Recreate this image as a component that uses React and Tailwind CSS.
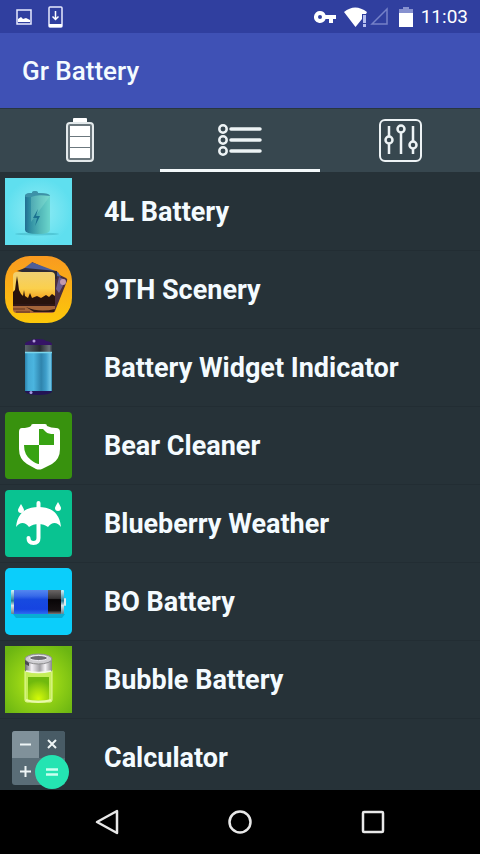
import React, { useState } from 'react';

function FourLIcon() {
  return (
    <svg viewBox="0 0 67 67" className="h-[67px] w-[67px]" aria-hidden="true">
      <defs>
        <radialGradient id="fourBg">
          <stop offset="0" stopColor="#92ecf4" />
          <stop offset="1" stopColor="#5fdfef" />
        </radialGradient>
        <linearGradient id="fourBody" x1="0" y1="0" x2="1" y2="0">
          <stop offset="0" stopColor="#216d91" />
          <stop offset="0.2" stopColor="#2f8da2" />
          <stop offset="0.6" stopColor="#52b7b8" />
          <stop offset="1" stopColor="#6bd6cc" />
        </linearGradient>
      </defs>
      <rect width="67" height="67" fill="url(#fourBg)" />
      <ellipse cx="32" cy="56" rx="22" ry="1.5" fill="#3aaebd" opacity="0.5" />
      <path d="M20 18q0-3 7-3q0-2 3-2q3 0 3 2q12 0 12 3v34q0 4-12 4q-13 0-13-4z" fill="url(#fourBody)" />
      <path d="M20 18q0-3 7-3q0-2 3-2q3 0 3 2q12 0 12 3q-15-2-19 1q-6 1-6-1z" fill="#3d91a8" />
      <path d="M45 18L26 44V19q7-3 19-1z" fill="#a5eee0" opacity="0.25" />
      <path d="M33 31l-5 9h4l-2 8l5-10h-4z" fill="#1b7290" />
    </svg>
  );
}

function SceneryIcon() {
  return (
    <svg viewBox="0 0 67 67" className="h-[67px] w-[67px]" aria-hidden="true">
      <defs>
        <linearGradient id="scBg" x1="0" y1="0" x2="0" y2="1">
          <stop offset="0" stopColor="#f99a20" />
          <stop offset="1" stopColor="#fcc80a" />
        </linearGradient>
        <linearGradient id="scSky" x1="0" y1="0" x2="0" y2="1">
          <stop offset="0" stopColor="#f0cf72" />
          <stop offset="0.4" stopColor="#fbd04c" />
          <stop offset="0.7" stopColor="#f19a19" />
        </linearGradient>
        <clipPath id="scClip">
          <rect x="8" y="16" width="42" height="41" rx="4" />
        </clipPath>
      </defs>
      <rect width="67" height="67" rx="25" fill="url(#scBg)" />
      <path d="M27 6L61 22q2 1 1 3L50 55q-1 2-3 1L14 40z" fill="#4b2f3c" />
      <path d="M18 13L26 7q1-1 3 0l24 9l3 5l-12-3z" fill="#4d5e99" />
      <path d="M54 21l7 3l-7 13l-3-4z" fill="#6b5c8c" />
      <circle cx="58" cy="26" r="3" fill="#c39aae" />
      <path d="M12 15l8-3l32 3v8z" fill="#2c2a35" />
      <g clipPath="url(#scClip)">
        <rect x="8" y="16" width="42" height="41" fill="url(#scSky)" />
        <path d="M8 36L10 34L11 26L12 20L13 26L14 34L16 38L18 40L19 34L20 40L23 42L25 37L27 42L32 40L36 42L41 39L44 41L47 38L50 40V49H8z" fill="#28120d" />
        <rect x="8" y="48" width="42" height="9" fill="#a5643a" />
        <path d="M8 48h42v2H8z" fill="#301716" />
        <path d="M21 51q13 6 29 2v3H29z" fill="#2d1917" />
        <path d="M8 53h12M11 56h14" stroke="#60331f" strokeWidth="1" />
      </g>
    </svg>
  );
}

function WidgetIndicatorIcon() {
  return (
    <svg viewBox="0 0 67 67" className="h-[67px] w-[67px]" aria-hidden="true">
      <defs>
        <linearGradient id="wiBody" x1="0" y1="0" x2="1" y2="0">
          <stop offset="0" stopColor="#2b83ad" />
          <stop offset="0.12" stopColor="#45abd6" />
          <stop offset="0.32" stopColor="#4bb5df" />
          <stop offset="0.6" stopColor="#2f84ad" />
          <stop offset="0.78" stopColor="#3f9fcb" />
          <stop offset="0.94" stopColor="#70c7e8" />
          <stop offset="1" stopColor="#287fa9" />
        </linearGradient>
        <linearGradient id="wiEmpty" x1="0" y1="0" x2="1" y2="0">
          <stop offset="0" stopColor="#59636a" />
          <stop offset="0.55" stopColor="#272b30" />
          <stop offset="0.9" stopColor="#6a7177" />
          <stop offset="1" stopColor="#343b42" />
        </linearGradient>
      </defs>
      <path d="M20 10q0-2 5-3q1-2 8-2q7 0 8 2q6 1 6 3v3H20z" fill="#351466" />
      <circle cx="29" cy="7" r="1.5" fill="#b49bdb" />
      <rect x="20" y="11" width="27" height="9" fill="url(#wiEmpty)" />
      <path d="M20 56h27v2q-3 3-14 3q-10 0-13-3z" fill="#231354" />
      <circle cx="26" cy="58.5" r="1.5" fill="#a59ae3" />
      <rect x="20" y="18" width="27" height="39" fill="url(#wiBody)" />
      <path d="M20 18.500h27" stroke="#7bd5eb" strokeWidth="1.500" />
    </svg>
  );
}

function BearCleanerIcon() {
  return (
    <svg viewBox="0 0 67 67" className="h-[67px] w-[67px]" aria-hidden="true">
      <rect width="67" height="67" rx="4" fill="#38920e" />
      <path d="M17 16q6 0 9-2q0-2 2-2h12q2 0 2 2q4 2 9 2q4 0 4 4v17q0 10-8 15l-10 5q-3 1-6 0l-9-5q-8-5-8-15V20q0-4 3-4z" fill="#fff" />
      <path d="M34 17h4l3 3q2 2 8 2v11H34zM19 33h15v19q-3 0-8-4q-7-5-7-15z" fill="#38a313" />
    </svg>
  );
}

function WeatherIcon() {
  return (
    <svg viewBox="0 0 67 67" className="h-[67px] w-[67px]" aria-hidden="true">
      <rect width="67" height="67" rx="4" fill="#09c391" />
      <path d="M33.500 13v5M33.500 34v14q0 5-5 5t-5-5" fill="none" stroke="#fff" strokeWidth="4" strokeLinecap="round" />
      <path d="M11 37q2-20 22.500-20T56 37q-3-4-6.500-4T43 37q-4-3-9.500-3T24 37q-3-4-6.500-4T11 37z" fill="#fff" />
      <path d="M16 14q-3 5-3 6a3 3 0 0 0 6 0q0-1-3-6zM53 12q-3 5-3 6a3 3 0 0 0 6 0q0-1-3-6z" fill="#fff" />
    </svg>
  );
}

function BoBatteryIcon() {
  return (
    <svg viewBox="0 0 67 67" className="h-[67px] w-[67px]" aria-hidden="true">
      <defs>
        <linearGradient id="boBlue" x1="0" y1="0" x2="0" y2="1">
          <stop offset="0" stopColor="#5487f0" />
          <stop offset="0.25" stopColor="#376ae9" />
          <stop offset="0.4" stopColor="#174ae0" />
          <stop offset="0.8" stopColor="#1644e1" />
          <stop offset="1" stopColor="#2e6bf2" />
        </linearGradient>
        <linearGradient id="boBlack" x1="0" y1="0" x2="0" y2="1">
          <stop offset="0" stopColor="#6a6666" />
          <stop offset="0.35" stopColor="#363435" />
          <stop offset="0.4" stopColor="#080507" />
          <stop offset="0.85" stopColor="#161113" />
          <stop offset="1" stopColor="#827776" />
        </linearGradient>
        <linearGradient id="boMetal" x1="0" y1="0" x2="0" y2="1">
          <stop offset="0" stopColor="#d6f6fb" />
          <stop offset="0.45" stopColor="#287b95" />
          <stop offset="0.65" stopColor="#d9e4e8" />
          <stop offset="1" stopColor="#66818a" />
        </linearGradient>
      </defs>
      <rect width="67" height="67" rx="5" fill="#0bcefb" />
      <path d="M8 46h52l-3 4H11z" fill="#058bac" opacity="0.5" />
      <rect x="6" y="22" width="4" height="24" rx="1" fill="url(#boMetal)" />
      <rect x="56" y="22" width="3" height="24" rx="1" fill="url(#boMetal)" />
      <rect x="59" y="30" width="2" height="8" rx="1" fill="#dce9ed" />
      <rect x="9" y="22" width="35" height="24" fill="url(#boBlue)" />
      <rect x="43" y="22" width="13" height="24" fill="url(#boBlack)" />
    </svg>
  );
}

function BubbleBatteryIcon() {
  return (
    <svg viewBox="0 0 67 67" className="h-[67px] w-[67px]" aria-hidden="true">
      <defs>
        <radialGradient id="buBg" cx="50%" cy="55%" r="65%">
          <stop offset="0" stopColor="#c0ef15" />
          <stop offset="0.5" stopColor="#91d015" />
          <stop offset="1" stopColor="#6bb512" />
        </radialGradient>
        <linearGradient id="buMetal" x1="0" y1="0" x2="1" y2="0">
          <stop offset="0" stopColor="#68686b" />
          <stop offset="0.25" stopColor="#f4f1f5" />
          <stop offset="0.55" stopColor="#a19fa4" />
          <stop offset="0.75" stopColor="#f5f3f6" />
          <stop offset="1" stopColor="#88878b" />
        </linearGradient>
        <radialGradient id="buFill" cx="50%" cy="95%" r="80%">
          <stop offset="0" stopColor="#d4fb06" />
          <stop offset="0.5" stopColor="#a5da0e" />
          <stop offset="1" stopColor="#70b90d" />
        </radialGradient>
      </defs>
      <rect width="67" height="67" fill="url(#buBg)" />
      <rect x="20" y="23" width="27" height="33" rx="2" fill="#c5ee5a" stroke="#e5f79e" strokeWidth="1" />
      <rect x="23" y="31" width="21" height="23" fill="url(#buFill)" />
      <path d="M21 54q12 4 25 0" stroke="#e9f9aa" strokeWidth="2" fill="none" />
      <path d="M20 14q13 7 27 0v11q-13 3-27 0z" fill="url(#buMetal)" />
      <ellipse cx="33.500" cy="13" rx="13.500" ry="5" fill="#cfced2" stroke="#8d8c90" strokeWidth="1" />
      <ellipse cx="33.500" cy="12" rx="9" ry="2.500" fill="#6d6b70" stroke="#eeedf1" strokeWidth="1" />
      <path d="M20 14l4 3v3l-4-2z" fill="#4b4b50" />
      <path d="M21 25q12 3 25 0" stroke="#f5f6e8" strokeWidth="1.500" fill="none" />
    </svg>
  );
}

function CalculatorIcon() {
  return (
    <svg viewBox="0 0 67 67" className="h-[67px] w-[67px]" aria-hidden="true">
      <defs>
        <clipPath id="calcClip">
          <rect x="7" y="7" width="53" height="54" rx="3" />
        </clipPath>
      </defs>
      <g clipPath="url(#calcClip)">
        <rect x="7" y="7" width="53" height="54" fill="#5a6d77" />
        <rect x="7" y="7" width="27" height="27" fill="#80919a" />
        <rect x="34" y="7" width="26" height="27" fill="#485b65" />
      </g>
      <path d="M15 20.500h11M15 47.500h11M20.500 42v11M43 16l8 8M51 16l-8 8" stroke="#eef5f6" strokeWidth="2" fill="none" />
      <circle cx="47" cy="48" r="17" fill="#24e4b2" />
      <path d="M41 45.500h12M41 50.500h12" stroke="#c9fff0" strokeWidth="2.500" />
    </svg>
  );
}

function BatteryTabIcon() {
  return (
    <svg viewBox="0 0 28 44" className="h-11 w-7" aria-hidden="true">
      <rect x="7" y="0" width="14" height="6" rx="1" fill="#fff" />
      <rect x="1" y="5" width="26" height="38" rx="3" fill="#6b777d" stroke="#e3e9eb" strokeWidth="2" />
      <path d="M4 8h20v10H4zM4 19h20v10H4zM4 30h20v10H4z" fill="#fff" />
    </svg>
  );
}

function ListTabIcon() {
  return (
    <svg viewBox="0 0 44 34" className="h-[34px] w-11" fill="none" stroke="#edf3f5" aria-hidden="true">
      <g strokeWidth="2.500">
        <circle cx="5" cy="6" r="3.700" />
        <circle cx="5" cy="17" r="3.700" />
        <circle cx="5" cy="28" r="3.700" />
      </g>
      <path d="M13 6h29M13 17h29M13 28h29" strokeWidth="3.500" strokeLinecap="round" />
    </svg>
  );
}

function SlidersTabIcon() {
  return (
    <svg viewBox="0 0 44 44" className="h-11 w-11" fill="none" stroke="#edf3f5" strokeWidth="2.500" aria-hidden="true">
      <rect x="2" y="2" width="41" height="41" rx="5" strokeWidth="2" />
      <path d="M11 8v10M11 26v10M23 15v21M35 8v15M35 31v5" />
      <circle cx="11" cy="22" r="3.500" />
      <circle cx="23" cy="11" r="3.500" />
      <circle cx="35" cy="27" r="3.500" />
    </svg>
  );
}

const apps = [
  { name: '4L Battery', Icon: FourLIcon },
  { name: '9TH Scenery', Icon: SceneryIcon },
  { name: 'Battery Widget Indicator', Icon: WidgetIndicatorIcon },
  { name: 'Bear Cleaner', Icon: BearCleanerIcon },
  { name: 'Blueberry Weather', Icon: WeatherIcon },
  { name: 'BO Battery', Icon: BoBatteryIcon },
  { name: 'Bubble Battery', Icon: BubbleBatteryIcon },
  { name: 'Calculator', Icon: CalculatorIcon },
];

const tabs = [
  { id: 'battery', label: 'Battery', Icon: BatteryTabIcon },
  { id: 'apps', label: 'Apps', Icon: ListTabIcon },
  { id: 'settings', label: 'Settings', Icon: SlidersTabIcon },
];

function StatusBar() {
  return (
    <div className="flex h-[33px] shrink-0 items-center justify-between bg-[#303f9f] pl-4 pr-3 text-white">
      <div className="flex items-center gap-4">
        <svg viewBox="0 0 16 16" className="h-4 w-4" aria-hidden="true">
          <rect x="1" y="1" width="14" height="14" fill="none" stroke="#e6eaff" strokeWidth="1.500" />
          <path d="M2 13v-3l3-2l2 2l3-1l4 2v2z" fill="#fff" />
        </svg>
        <svg viewBox="0 0 16 22" className="h-[22px] w-4" aria-hidden="true">
          <rect x="1" y="1" width="13" height="20" rx="1" fill="none" stroke="#e6eaff" strokeWidth="1.500" />
          <path d="M1 18h13v3H1z" fill="#fff" />
          <path d="M7.500 5v8M4.500 10.500l3 3l3-3" fill="none" stroke="#fff" strokeWidth="1.500" />
        </svg>
      </div>
      <div className="flex items-center">
        <svg viewBox="0 0 22 14" className="h-[14px] w-[22px]" aria-hidden="true">
          <path fillRule="evenodd" d="M6 1a6 6 0 1 0 5.600 8H15v4h4V9h3V5H11.600A6 6 0 0 0 6 1zm0 4a2 2 0 1 1 0 4a2 2 0 0 1 0-4z" fill="#fff" />
        </svg>
        <svg viewBox="0 0 24 20" className="ml-2 h-5 w-6" aria-hidden="true">
          <path d="M0 5q11-9 23 0l-1 2h-4v5l-6.500 8z" fill="#fff" />
          <path d="M19 8h3v8h-3zM19 17h3v3h-3z" fill="#b7c0ef" />
        </svg>
        <svg viewBox="0 0 19 19" className="ml-0.5 h-[19px] w-[19px]" aria-hidden="true">
          <path d="M2 17L17 2v15z" fill="none" stroke="#7581c8" strokeWidth="1.500" />
        </svg>
        <svg viewBox="0 0 14 20" className="ml-2.5 h-5 w-3.5" aria-hidden="true">
          <path d="M4 0h6v2h4v4H0V2h4z" fill="#8791cf" />
          <path d="M0 6h14v14H0z" fill="#fff" />
        </svg>
        <span className="ml-2 text-[19px] leading-6">11:03</span>
      </div>
    </div>
  );
}

function NavBar() {
  return (
    <nav className="grid h-16 shrink-0 grid-cols-3 bg-black px-10">
      <button type="button" aria-label="Back" className="flex items-center justify-center">
        <svg viewBox="0 0 26 26" className="h-[26px] w-[26px]" aria-hidden="true">
          <path d="M3 13L23 2v22z" fill="none" stroke="#e8e8e8" strokeWidth="2.500" strokeLinejoin="round" />
        </svg>
      </button>
      <button type="button" aria-label="Home" className="flex items-center justify-center">
        <svg viewBox="0 0 26 26" className="h-[26px] w-[26px]" aria-hidden="true">
          <circle cx="13" cy="13" r="10.500" fill="none" stroke="#e8e8e8" strokeWidth="2.500" />
        </svg>
      </button>
      <button type="button" aria-label="Recent apps" className="flex items-center justify-center">
        <svg viewBox="0 0 26 26" className="h-[26px] w-[26px]" aria-hidden="true">
          <rect x="3" y="3" width="20" height="20" rx="1" fill="none" stroke="#e8e8e8" strokeWidth="2.500" />
        </svg>
      </button>
    </nav>
  );
}

export default function App() {
  const [activeTab, setActiveTab] = useState('apps');

  return (
    <div className="flex h-screen flex-col bg-[#263238] font-['Roboto',sans-serif]">
      <StatusBar />

      <header className="flex h-[75px] shrink-0 items-center bg-[#3f51b5] px-[22px]">
        <h1 className="text-[26px] leading-8 font-medium text-[#f4fbff]">Gr Battery</h1>
      </header>

      {/* Tabs */}
      <div role="tablist" className="grid h-16 shrink-0 grid-cols-3 border-t border-[#28363f] bg-[#37474f]">
        {tabs.map(({ id, label, Icon }) => (
          <button
            key={id}
            type="button"
            role="tab"
            aria-label={label}
            aria-selected={activeTab === id}
            onClick={() => setActiveTab(id)}
            className={`flex items-center justify-center border-b-3 pt-0.5 ${activeTab === id ? 'border-[#f2f8fa]' : 'border-transparent'}`}
          >
            <Icon />
          </button>
        ))}
      </div>

      {/* App List */}
      <ul className="min-h-0 flex-1 overflow-y-auto pt-px [scrollbar-width:none]">
        {apps.map(({ name, Icon }) => (
          <li key={name} className="h-[78px] border-b border-[#222d33]">
            <button type="button" className="flex h-full w-full items-center gap-8 px-[5px] text-left">
              <Icon />
              <span className="text-[27px] leading-8 font-bold text-[#f4fbff]">{name}</span>
            </button>
          </li>
        ))}
      </ul>

      <NavBar />
    </div>
  );
}
